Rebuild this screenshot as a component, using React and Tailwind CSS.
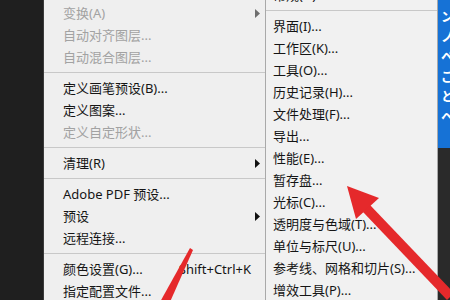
const font = "font-['Noto_Sans','Noto_Sans_CJK_SC',sans-serif]";

function Caret({ muted }) {
  return (
    <svg width="5" height="9" viewBox="0 0 5 9" className="shrink-0">
      <polygon points="0,0 5,4.5 0,9" fill={muted ? "#6e6e6e" : "#111111"} />
    </svg>
  );
}

function Sep() {
  return (
    <div className="flex h-[9px] items-center">
      <div className="h-px w-full bg-[#c8c8c8]" />
    </div>
  );
}

function Row({ label, muted, sub, shortcut, pad = "pl-[19px] pr-[5px]" }) {
  return (
    <div className={`flex h-[22px] items-center justify-between ${pad} text-[13px] leading-none ${muted ? "text-[#a2a2a2]" : "text-[#151515]"}`}>
      <span className="whitespace-nowrap">{label}</span>
      {sub && <Caret muted={muted} />}
      {shortcut && <span className="whitespace-nowrap pr-[9px]">{shortcut}</span>}
    </div>
  );
}

const prefs = [
  "界面(I)...",
  "工作区(K)...",
  "工具(O)...",
  "历史记录(H)...",
  "文件处理(F)...",
  "导出...",
  "性能(E)...",
  "暂存盘...",
  "光标(C)...",
  "透明度与色域(T)...",
  "单位与标尺(U)...",
  "参考线、网格和切片(S)...",
  "增效工具(P)...",
];

export default function App() {
  return (
    <div className={`relative flex h-[300px] w-[450px] overflow-hidden bg-[#202020] ${font}`}>
      <div className="w-[43px] shrink-0 bg-[#1f1f1f]" />

      {/* edit menu */}
      <div className="w-[222px] shrink-0 border-l border-[#3a3a3a] bg-[#efefef] pt-[2px]">
        <Row label="变换(A)" muted sub />
        <Row label="自动对齐图层..." muted />
        <Row label="自动混合图层..." muted />
        <Sep />
        <Row label="定义画笔预设(B)..." />
        <Row label="定义图案..." />
        <Row label="定义自定形状..." muted />
        <Sep />
        <Row label="清理(R)" sub />
        <Sep />
        <Row label="Adobe PDF 预设..." />
        <Row label="预设" sub />
        <Row label="远程连接..." />
        <Sep />
        <Row label="颜色设置(G)..." shortcut="Shift+Ctrl+K" />
        <Row label="指定配置文件..." />
      </div>

      {/* preferences submenu */}
      <div className="w-[173px] shrink-0 border-x border-[#a9a9a9] bg-[#f1f1f1]">
        <div className="-mt-[16px]">
          <div className="flex h-[22px] items-center justify-between pl-[7px] pr-[14px] text-[13px] leading-none text-[#151515]">
            <span>常规(G)...</span>
            <span>Ctrl+K</span>
          </div>
          <Sep />
          {prefs.map((p) => (
            <Row key={p} label={p} pad="pl-[7px]" />
          ))}
        </div>
      </div>

      <div className="flex w-[12px] shrink-0 flex-col">
        <div className="h-[148px] overflow-hidden bg-[#1672d6] pl-[3px] pt-[6px] text-[13px] font-bold leading-[20px] text-white">
          <div>ン</div>
          <div>ノ</div>
          <div>ペ</div>
          <div>ご</div>
          <div>と</div>
          <div>ヘ</div>
        </div>
        <div className="flex-1 bg-[#2a2a2a]" />
      </div>

      <svg className="pointer-events-none absolute inset-0" width="450" height="300" viewBox="0 0 450 300">
        <polygon points="347,186 379,198 356,219" fill="#e5292b" />
        <polygon points="370,205 454,293 447,300 363,212" fill="#e5292b" />
        <polygon points="190,248 193,250 170,302 160,302" fill="#e5292b" />
      </svg>
    </div>
  );
}
